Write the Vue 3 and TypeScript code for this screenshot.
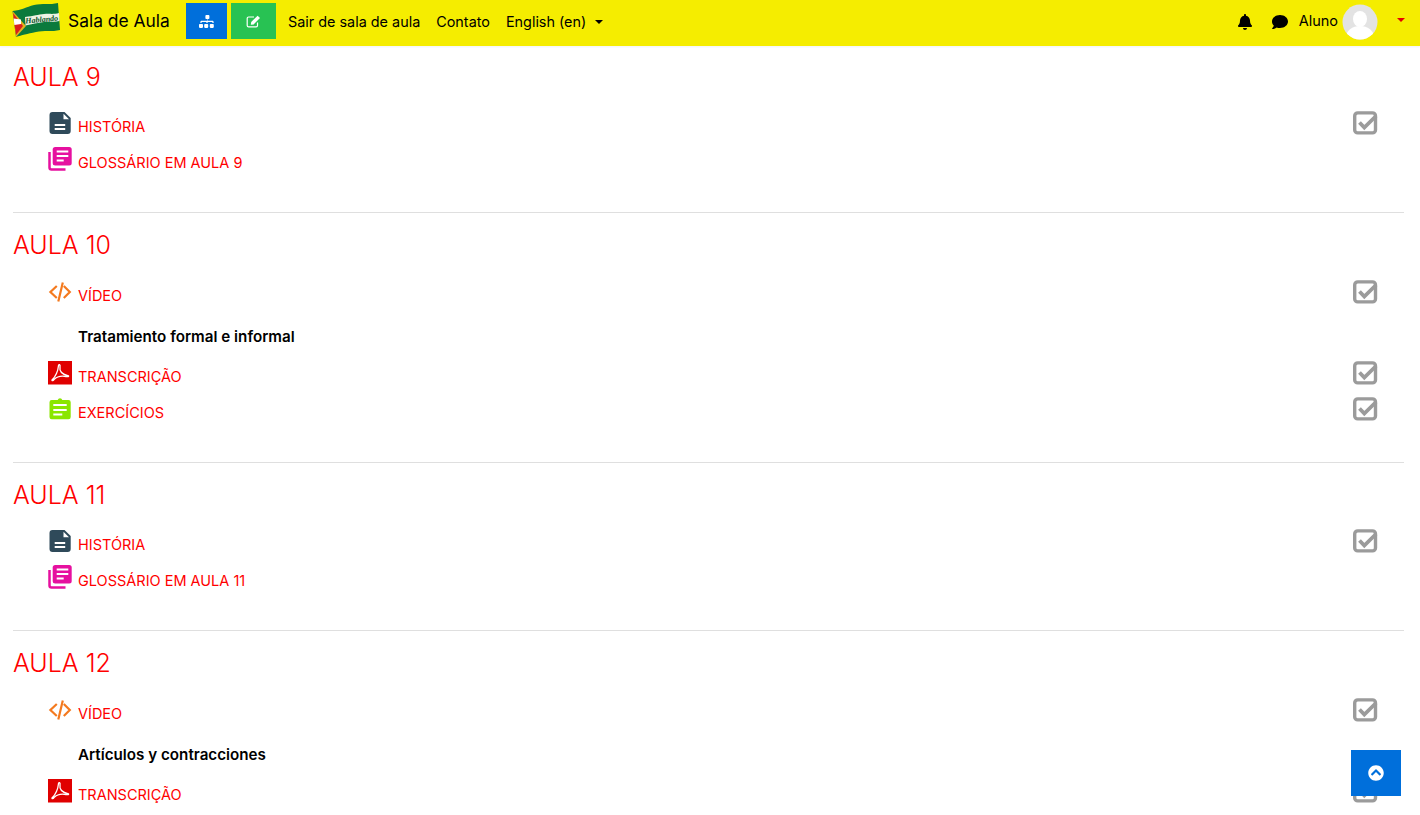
<script setup lang="ts">
type Kind = 'doc' | 'gloss' | 'video' | 'pdf' | 'task'
interface Row { kind: Kind; label: string; done: boolean; note?: string }
interface Sec { title: string; rows: Row[] }

const sections: Sec[] = [
  { title: 'AULA 9', rows: [
    { kind: 'doc', label: 'HISTÓRIA', done: true },
    { kind: 'gloss', label: 'GLOSSÁRIO EM AULA 9', done: false },
  ] },
  { title: 'AULA 10', rows: [
    { kind: 'video', label: 'VÍDEO', done: true, note: 'Tratamiento formal e informal' },
    { kind: 'pdf', label: 'TRANSCRIÇÃO', done: true },
    { kind: 'task', label: 'EXERCÍCIOS', done: true },
  ] },
  { title: 'AULA 11', rows: [
    { kind: 'doc', label: 'HISTÓRIA', done: true },
    { kind: 'gloss', label: 'GLOSSÁRIO EM AULA 11', done: false },
  ] },
  { title: 'AULA 12', rows: [
    { kind: 'video', label: 'VÍDEO', done: true, note: 'Artículos y contracciones' },
    { kind: 'pdf', label: 'TRANSCRIÇÃO', done: true },
  ] },
]
</script>

<template>
  <div class="page">
    <header class="nav">
      <svg class="logo" viewBox="0 0 48 36" aria-label="Hablando">
        <path d="M.5 9 C10 8 14 5 22 3 C30 1 38 3 46 1 L48 28 C40 30 32 28 24 30 C15 32 10 33 4 35 Z" fill="#0b7a3c" />
        <path d="M.5 9 L4 35 L14 24 Z" fill="#e4b21c" />
        <path d="M1 11 L4 33 L11 24 Z" fill="#d9201c" />
        <path d="M1.600 16.500 L9 17.500 L9 22 L2.400 23 Z" fill="#fff" />
        <path d="M13 15 C22 14 26 12.500 32 12 C38 11.500 42 12.500 47 11 L47.500 19 C42 20.500 38 19 32 20 C26 21 20 22 13.500 23.500 Z" fill="#eef2e4" />
        <text x="13.500" y="21.500" class="logo-text" transform="rotate(-5 13 21)">Hablando</text>
      </svg>
      <span class="brand">Sala de Aula</span>
      <a class="square blue">
        <svg width="16" height="13" viewBox="0 0 640 512" fill="#fff"><path d="M128 352H32c-17.670 0-32 14.330-32 32v96c0 17.670 14.330 32 32 32h96c17.670 0 32-14.330 32-32v-96c0-17.670-14.330-32-32-32zm-24-80h192v48h48v-48h192v48h48v-48c0-26.470-21.530-48-48-48H344v-64h40c17.670 0 32-14.330 32-32V32c0-17.670-14.330-32-32-32h-96c-17.670 0-32 14.330-32 32v96c0 17.670 14.330 32 32 32h40v64H104c-26.470 0-48 21.530-48 48v48h48v-48zm456 80h-96c-17.670 0-32 14.330-32 32v96c0 17.670 14.330 32 32 32h96c17.670 0 32-14.330 32-32v-96c0-17.670-14.330-32-32-32zm-224 0h-96c-17.670 0-32 14.330-32 32v96c0 17.670 14.330 32 32 32h96c17.670 0 32-14.330 32-32v-96c0-17.670-14.330-32-32-32z" /></svg>
      </a>
      <a class="square green">
        <svg width="16" height="13" viewBox="0 0 16 13">
          <path d="M11.500 7.500V10.500a1.400 1.400 0 0 1-1.400 1.400H2.600a1.400 1.400 0 0 1-1.400-1.400V3.400A1.400 1.400 0 0 1 2.600 2H8" fill="none" stroke="#fff" stroke-width="1.200" />
          <path d="M5.200 7 L11.600 .7 L14 3 L7.600 9.400 L4.800 9.800 Z" fill="#fff" />
        </svg>
      </a>
      <a class="link first">Sair de sala de aula</a>
      <a class="link">Contato</a>
      <a class="link">English (en)<i class="caret" /></a>

      <svg class="bell" width="16" height="16" viewBox="0 0 448 512"><path d="M224 512c35.320 0 63.970-28.650 63.970-64H160.030c0 35.350 28.650 64 63.970 64zm215.390-149.710c-19.320-20.760-55.470-51.990-55.470-154.290 0-77.700-54.480-139.900-127.940-155.160V32c0-17.670-14.320-32-31.980-32s-31.980 14.330-31.980 32v20.840C118.560 68.100 64.080 130.300 64.080 208c0 102.300-36.150 133.530-55.470 154.290-6 6.450-8.660 14.160-8.610 21.710.11 16.400 12.980 32 32.100 32h383.800c19.120 0 32-15.600 32.100-32 .05-7.550-2.610-15.270-8.610-21.710z" /></svg>
      <svg class="comment" width="16" height="16" viewBox="0 0 512 512"><path d="M256 32C114.600 32 0 125.100 0 240c0 49.600 21.400 95 57 130.700C44.500 421.100 2.700 466 2.200 466.500c-2.200 2.300-2.800 5.700-1.500 8.700S4.800 480 8 480c66.300 0 116-31.800 140.600-51.400 32.700 12.300 69 19.400 107.400 19.400 141.400 0 256-93.100 256-208S397.400 32 256 32z" /></svg>
      <span class="user">Aluno</span>
      <svg class="avatar" width="36" height="36" viewBox="0 0 36 36">
        <defs><clipPath id="avatar-clip"><circle cx="18" cy="18" r="17.500" /></clipPath></defs>
        <circle cx="18" cy="18" r="17.500" fill="#e3e3e3" />
        <g clip-path="url(#avatar-clip)" fill="#fff">
          <ellipse cx="18" cy="15" rx="7" ry="8" />
          <ellipse cx="18" cy="33" rx="14" ry="11" />
        </g>
      </svg>
      <i class="caret red" />
    </header>

    <main class="content">
      <section v-for="s in sections" :key="s.title" class="section">
        <h3 class="title">{{ s.title }}</h3>
        <template v-for="r in s.rows" :key="r.label">
          <div class="row" :class="{ 'row-video': r.kind === 'video' }">
            <svg v-if="r.kind === 'doc'" class="icon" viewBox="0 0 24 24">
              <path d="M4.500 1H16.500L22.700 7V20a3 3 0 0 1-3 3H4.500a3 3 0 0 1-3-3V4a3 3 0 0 1 3-3z" fill="#2f4a5a" />
              <path d="M15.500 2.800 L21 8.200 H15.500 Z" fill="#fff" />
              <rect x="6.700" y="13" width="10.500" height="2" fill="#fff" />
              <rect x="6.700" y="17" width="10.500" height="2" fill="#fff" />
            </svg>
            <svg v-else-if="r.kind === 'gloss'" class="icon" viewBox="0 0 24 24">
              <path d="M1.500 5v15.500a2 2 0 0 0 2 2h14" fill="none" stroke="#e6109f" stroke-width="2.500" />
              <rect x="4.700" y="0" width="19" height="18.500" rx="2.500" fill="#e6109f" />
              <rect x="8.700" y="3.500" width="11.600" height="2" fill="#fff" />
              <rect x="8.700" y="8" width="11.600" height="2" fill="#fff" />
              <rect x="8.700" y="12.500" width="7" height="2" fill="#fff" />
            </svg>
            <svg v-else-if="r.kind === 'video'" class="icon" viewBox="0 0 24 24">
              <path d="M8.800 6 L2.400 12 L8.800 18 M15.800 6 L21.800 12 L15.800 18 M14.800 2.500 L10.300 21.500" fill="none" stroke="#f47a1f" stroke-width="2.200" />
            </svg>
            <svg v-else-if="r.kind === 'pdf'" class="icon" viewBox="0 0 24 24">
              <rect width="24" height="23.500" fill="#e00000" />
              <path d="M4 19 C7 16 10 10 10.500 4.500 C10.700 3 12.500 3.300 12 5.500 C11.200 10 14 13.500 20.500 14.800 C21 15.500 20 16 18 15.500 C14 14.800 9 15.500 6 18.500 C5 19.800 3.800 20 4 19 Z" fill="none" stroke="#fff" stroke-width="1.300" />
            </svg>
            <svg v-else class="icon" viewBox="0 0 24 24">
              <path d="M3.500 3h6.200a2.400 2.400 0 0 1 4.600 0h6.200a2.300 2.300 0 0 1 2.200 2.300v14.700a2.300 2.300 0 0 1-2.200 2.300h-16.800a2.300 2.300 0 0 1-2.200-2.300V5.300a2.300 2.300 0 0 1 2.200-2.300z" fill="#8ae600" />
              <rect x="5.300" y="7" width="13.400" height="2" fill="#fff" />
              <rect x="5.300" y="12" width="13.400" height="2" fill="#fff" />
              <rect x="5.300" y="16.500" width="9" height="2" fill="#fff" />
            </svg>
            <a class="label">{{ r.label }}</a>
            <svg v-if="r.done" class="check" viewBox="0 0 25 24">
              <rect x="1.700" y="1.900" width="20.800" height="20" rx="3" fill="none" stroke="#9b9b9b" stroke-width="3.400" />
              <path d="M6.500 11.500 L11.300 16.500 L23 5" fill="none" stroke="#9b9b9b" stroke-width="3.800" />
            </svg>
          </div>
          <div v-if="r.note" class="note">{{ r.note }}</div>
        </template>
      </section>
    </main>

    <a class="top">
      <svg width="16" height="16" viewBox="0 0 512 512" fill="#fff"><path d="M8 256C8 119 119 8 256 8s248 111 248 248-111 248-248 248S8 393 8 256zm231-113.900L103.500 277.600c-9.400 9.400-9.400 24.600 0 33.900l17 17c9.400 9.400 24.600 9.400 33.900 0L256 226.900l101.600 101.600c9.400 9.400 24.600 9.400 33.900 0l17-17c9.400-9.400 9.400-24.600 0-33.900L273 142.100c-9.400-9.400-24.600-9.400-34 0z" /></svg>
    </a>
  </div>
</template>

<style scoped>
.page {
  height: 815px;
  overflow: hidden;
  background: #fff;
  font-family: Inter, "Liberation Sans", sans-serif;
  font-size: 14.5px;
  color: #000;
}
.nav {
  height: 46px;
  display: flex;
  align-items: center;
  padding: 0 15px 0 12px;
  background: #f5ed00;
  box-shadow: 0 1px 2px rgba(0, 0, 0, 0.05);
}
.logo { width: 48px; height: 36px; flex: none; margin-top: -6px; }
.logo-text {
  font-family: "Liberation Serif", serif;
  font-style: italic;
  font-weight: 700;
  font-size: 8px;
  fill: #0a5228;
}
.brand { margin: -6px 0 0 8px; width: 102px; font-size: 17.400px; white-space: nowrap; }
.square {
  height: 36px;
  margin-top: -4px;
  display: flex;
  align-items: center;
  justify-content: center;
}
.blue { width: 41px; margin-left: 16px; background: #006fdb; }
.green { width: 45px; margin-left: 4px; background: #28c253; }
.link { margin: -4px 0 0 16px; font-size: 14.400px; white-space: nowrap; }
.link.first { margin-left: 12px; }
.caret {
  display: inline-block;
  width: 0;
  height: 0;
  margin-left: 9px;
  vertical-align: 3px;
  border: 4px solid transparent;
  border-top-color: #000;
  border-bottom-width: 0;
}
.caret.red { margin: -7px 0 0 19px; border-top-color: #e60000; }
.bell { margin: -2px 0 0 auto; }
.comment { margin: -2px 0 0 19px; }
.user { margin: -6px 0 0 11px; }
.avatar { margin: -3px 0 0 4px; flex: none; }
.content { margin-top: -1px; padding: 0 16px 0 13px; }
.section { padding: 16px 0 32px; border-bottom: 1px solid #dfdfdf; }
.title {
  margin: 0 0 15px;
  font-size: 25px;
  line-height: 32px;
  font-weight: 300;
  color: #f00;
}
.row {
  height: 36px;
  display: flex;
  align-items: center;
  padding: 0 26px 0 35px;
}
.row-video { margin-top: 16px; }
.icon { width: 24px; height: 24px; flex: none; margin-bottom: 6px; }
.label { margin-left: 6px; color: #f00; }
.check { width: 25px; height: 24px; margin: 0 0 6px auto; flex: none; }
.note {
  height: 45px;
  display: flex;
  align-items: center;
  padding: 1px 0 0 65px;
  box-sizing: border-box;
  font-size: 15.200px;
  font-weight: 600;
}
.top {
  position: fixed;
  left: 1351px;
  top: 750px;
  width: 50px;
  height: 46px;
  display: flex;
  align-items: center;
  justify-content: center;
  background: #006fdb;
}
</style>
